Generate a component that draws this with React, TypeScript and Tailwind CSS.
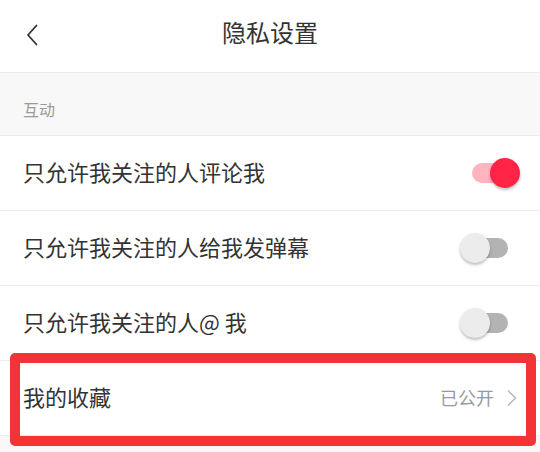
import React, { useState } from 'react';

const font = { fontFamily: '"Noto Sans CJK SC", "Noto Sans", sans-serif' };

interface ToggleProps {
  on: boolean;
  onChange: () => void;
}

const Toggle = ({ on, onChange }: ToggleProps) => (
  <button onClick={onChange} className="relative w-[60px] h-[30px] shrink-0">
    <span
      className={`absolute left-[12px] top-[5px] w-[36px] h-[20px] rounded-full ${
        on ? 'bg-[#ffb4c0]' : 'bg-[#b3b3b3]'
      }`}
    />
    <span
      className={`absolute top-0 w-[30px] h-[30px] rounded-full shadow-[0_2px_3px_rgba(0,0,0,0.25)] ${
        on ? 'left-[30px] bg-[#ff2345]' : 'left-0 bg-[#ececec]'
      }`}
    />
  </button>
);

const App = () => {
  const [settings, setSettings] = useState({
    comment: true,
    danmaku: false,
    mention: false,
  });

  const rows: { key: keyof typeof settings; label: string }[] = [
    { key: 'comment', label: '只允许我关注的人评论我' },
    { key: 'danmaku', label: '只允许我关注的人给我发弹幕' },
    { key: 'mention', label: '只允许我关注的人@ 我' },
  ];

  return (
    <div className="w-full h-[452px] bg-[#f8f8f8] overflow-hidden" style={font}>
      {/* Header */}
      <div className="relative h-[73px] bg-white border-b border-[#ececec] flex items-center justify-center pb-[8px]">
        <button className="absolute left-[24px] top-[23px] w-[16px] h-[24px] flex items-center justify-center">
          <svg width="12" height="22" viewBox="0 0 12 22" fill="none">
            <polyline points="10.5,1.5 2,11 10.5,20.5" stroke="#333" strokeWidth="1.8" strokeLinecap="round" strokeLinejoin="round" />
          </svg>
        </button>
        <h1 className="text-[24px] text-[#333] leading-none">隐私设置</h1>
      </div>

      {/* Section title */}
      <div className="h-[63px] border-b border-[#ececec] flex items-center px-[23px] pt-[10px]">
        <span className="text-[16px] text-[#9a9a9a] leading-none">互动</span>
      </div>

      {/* Toggle rows */}
      {rows.map((row) => (
        <div
          key={row.key}
          className="h-[75px] bg-white border-b border-[#ececec] flex items-center justify-between pl-[23px] pr-[20px]"
        >
          <span className="text-[22px] text-[#333] leading-none pb-[4px]">{row.label}</span>
          <Toggle
            on={settings[row.key]}
            onChange={() => setSettings({ ...settings, [row.key]: !settings[row.key] })}
          />
        </div>
      ))}

      {/* Collection row, highlighted */}
      <div className="relative h-[75px] bg-white border-b border-[#ececec] flex items-center justify-between pl-[23px] pr-[23px]">
        <span className="text-[22px] text-[#333] leading-none pb-[4px]">我的收藏</span>
        <div className="flex items-center gap-[13px]">
          <span className="text-[18px] text-[#999] leading-none pb-[3px]">已公开</span>
          <svg width="10" height="16" viewBox="0 0 10 16" fill="none">
            <polyline points="1.5,1 8.5,8 1.5,15" stroke="#bbb" strokeWidth="1.6" strokeLinecap="round" strokeLinejoin="round" />
          </svg>
        </div>
        <div className="absolute left-[10px] right-[4px] top-[-8px] bottom-[-11px] border-[10px] border-[#f43337] rounded-[5px] pointer-events-none" />
      </div>
    </div>
  );
};

export default App;
